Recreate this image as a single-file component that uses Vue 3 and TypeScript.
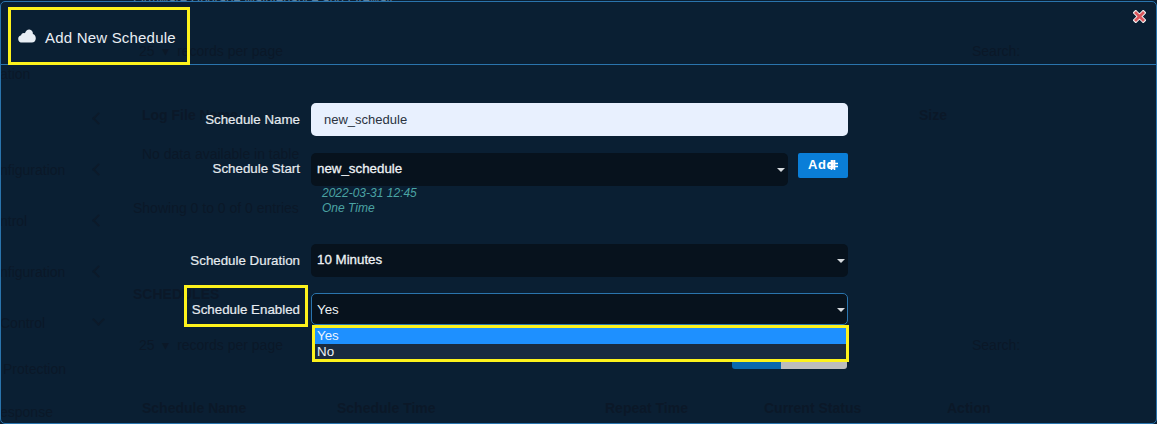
<template>
  <div class="screen">
    <!-- page dimmed behind the modal -->
    <div class="page" aria-hidden="true">
      <aside class="side">
        <div v-for="(item, i) in sideItems" :key="i" class="side-item">
          <span>{{ item.label }}</span>
          <i v-if="item.chevron" class="chev" :class="item.chevron"></i>
        </div>
      </aside>
      <main class="main">
        <div class="top-line">Firmware Upgrade Maintenance and Firewall</div>
        <div class="row row-a"><span class="ml8">25 &nbsp;▾&nbsp; records per page</span><span class="search">Search:</span></div>
        <div class="row row-b heavy"><span class="ml10">Log File Name</span><span class="size">Size</span></div>
        <div class="row row-c"><span class="ml10">No data available in table</span></div>
        <div class="row row-d"><span>Showing 0 to 0 of 0 entries</span></div>
        <div class="row row-e heavy"><span>SCHEDULES</span></div>
        <div class="row row-f"><span class="ml8">25 &nbsp;▾&nbsp; records per page</span><span class="search">Search:</span></div>
        <div class="row row-g heavy">
          <span class="col-a">Schedule Name</span>
          <span class="col-b">Schedule Time</span>
          <span class="col-c">Repeat Time</span>
          <span class="col-d">Current Status</span>
          <span class="col-e">Action</span>
        </div>
      </main>
    </div>

    <section class="modal">
      <header class="modal-head">
        <svg class="cloud" viewBox="0 0 18 14" width="18" height="14">
          <path d="M4.2 13.6C1.9 13.6.2 12 .2 9.9c0-1.8 1.2-3.200 2.900-3.600C3.400 4.900 4.500 4 5.800 4c.4 0 .8.100 1.100.2C7.700 1.900 9.500.4 11.400.6c2.300.200 3.700 2.100 3.500 4.500 1.700.500 2.900 2.200 2.900 4.100 0 2.500-1.700 4.400-3.900 4.400z" fill="#e8eef4" />
        </svg>
        <h2 class="title">Add New Schedule</h2>
        <svg class="close" viewBox="0 0 14 14" width="13" height="13">
          <path d="M3 3l8 8M11 3l-8 8" stroke="#f2f2f2" stroke-width="5" stroke-linecap="square" />
          <path d="M3.200 3.200l7.600 7.600M10.800 3.200l-7.600 7.600" stroke="#d9565c" stroke-width="3" stroke-linecap="square" />
        </svg>
      </header>

      <form class="form" @submit.prevent>
        <div class="field">
          <label class="label">Schedule Name</label>
          <input class="text-input" type="text" value="new_schedule" />
        </div>

        <div class="field field-start">
          <label class="label">Schedule Start</label>
          <div class="control">
            <div class="start-line">
              <div class="select select-start">new_schedule<i class="caret"></i></div>
              <button class="add-btn" type="button">Add<svg class="plus" viewBox="0 0 10 10" width="10" height="10"><path d="M0 3.500h10M0 6.500h10M3.500 0v10M6.500 0v10" stroke="#fff" stroke-width="1.600" /></svg></button>
            </div>
            <div class="hint">2022-03-31 12:45</div>
            <div class="hint">One Time</div>
          </div>
        </div>

        <div class="field field-duration">
          <label class="label">Schedule Duration</label>
          <div class="select">10 Minutes<i class="caret"></i></div>
        </div>

        <div class="field field-enabled">
          <label class="label">Schedule Enabled</label>
          <div class="control">
            <div class="select select-open">Yes<i class="caret"></i></div>
            <ul class="options">
              <li v-for="opt in enabledOptions" :key="opt" class="option" :class="{ active: opt === 'Yes' }">{{ opt }}</li>
            </ul>
          </div>
        </div>

        <div class="actions">
          <button class="btn-save" type="button"></button>
          <button class="btn-cancel" type="button"></button>
        </div>
      </form>
    </section>

    <!-- yellow annotation boxes drawn on top of the screenshot -->
    <div class="mark mark-title"></div>
    <div class="mark mark-label"></div>
    <div class="mark mark-options"></div>
  </div>
</template>

<script setup lang="ts">
interface SideItem {
  label: string
  chevron?: 'left' | 'down'
}

const sideItems: SideItem[] = [
  { label: 'ation' },
  { label: '', chevron: 'left' },
  { label: 'nfiguration', chevron: 'left' },
  { label: 'ntrol', chevron: 'left' },
  { label: 'nfiguration', chevron: 'left' },
  { label: 'Control', chevron: 'down' },
  { label: 'Protection' },
  { label: 'esponse' },
]

const enabledOptions: string[] = ['Yes', 'No']
</script>

<style>
html,
body {
  margin: 0;
  background: #0a1f33;
}
</style>

<style scoped>
.screen {
  position: relative;
  width: 1157px;
  height: 424px;
  overflow: hidden;
  background: #0a1f33;
  font-family: "Liberation Sans", Arial, sans-serif;
}

/* dimmed page */
.page {
  position: absolute;
  inset: 0;
  display: flex;
  color: #0b1828;
  font-size: 14px;
}

.side {
  width: 130px;
  flex-shrink: 0;
  padding-top: 64px;
  box-sizing: border-box;
}

.side-item {
  position: relative;
  height: 51px;
  line-height: 20px;
  white-space: nowrap;
}

.side-item:first-child {
  height: 45px;
}

.side-item:nth-child(6) {
  height: 46px;
}

.side-item:nth-child(7) {
  height: 43px;
  padding-left: 3px;
}

.chev {
  position: absolute;
  left: 94px;
  top: 2px;
  width: 7px;
  height: 7px;
  border-left: 2px solid #0c1a2a;
  border-bottom: 2px solid #0c1a2a;
}

.chev.left {
  transform: translateY(3px) rotate(45deg);
}

.chev.down {
  transform: translateY(0) rotate(-45deg);
}

.main {
  flex: 1;
  padding-left: 3px;
  position: relative;
}

.top-line {
  height: 1px;
  overflow: hidden;
  line-height: 0;
  font-size: 13px;
  color: #5a7f9f;
}

.row {
  display: flex;
  align-items: center;
  height: 20px;
  position: relative;
}

.row-a { margin-top: 40px; }
.row-b { margin-top: 44px; }
.row-c { margin-top: 19px; }
.row-d { margin-top: 34px; }
.row-e { margin-top: 66px; }
.row-f { margin-top: 31px; }
.row-g { margin-top: 43px; }

.heavy {
  font-weight: 700;
}

.ml8 { margin-left: 6px; }
.ml10 { margin-left: 9px; }

.search { position: absolute; left: 839px; }
.size { position: absolute; left: 786px; }
.col-a { position: absolute; left: 9px; }
.col-b { position: absolute; left: 204px; }
.col-c { position: absolute; left: 472px; }
.col-d { position: absolute; left: 631px; }
.col-e { position: absolute; left: 814px; }

/* modal */
.modal {
  position: absolute;
  inset: 1px 0 0 0;
  border: 1px solid #2a74ad;
  border-radius: 5px;
  box-sizing: border-box;
}

.modal-head {
  display: flex;
  align-items: center;
  height: 63px;
  padding: 8px 0 0 17px;
  border-bottom: 1px solid #2a74ad;
  box-sizing: border-box;
  position: relative;
}

.cloud {
  flex-shrink: 0;
  margin-top: -3px;
}

.title {
  margin: 0 0 0 9px;
  font-size: 15px;
  font-weight: 400;
  letter-spacing: 0.2px;
  color: #e9eef3;
}

.close {
  position: absolute;
  right: 10px;
  top: 8px;
}

.form {
  padding-top: 38px;
}

.field {
  display: flex;
  align-items: center;
  gap: 11px;
  width: 847px;
}

.field-start {
  align-items: flex-start;
  margin-top: 17px;
}

.field-start .label {
  line-height: 31px;
}

.field-duration {
  margin-top: 28px;
}

.field-enabled {
  align-items: flex-start;
  margin-top: 16px;
}

.field-enabled .label {
  line-height: 33px;
}

.label {
  width: 299px;
  flex-shrink: 0;
  text-align: right;
  font-size: 13.333px;
  color: #e6ebf0;
  -webkit-text-stroke: 0.2px #e6ebf0;
}

.control {
  flex: 1;
  min-width: 0;
  position: relative;
}

.text-input {
  flex: 1;
  min-width: 0;
  height: 33px;
  padding: 0 13px;
  box-sizing: border-box;
  border: 0;
  border-radius: 5px;
  outline: none;
  background: #e8f0fe;
  font: 13px "Liberation Sans", Arial, sans-serif;
  color: #2a3340;
}

.select {
  position: relative;
  flex: 1;
  min-width: 0;
  height: 33px;
  line-height: 32px;
  padding-left: 6px;
  box-sizing: border-box;
  border-radius: 5px;
  background: #07121d;
  font-size: 13.333px;
  color: #eef2f5;
  -webkit-text-stroke: 0.3px #eef2f5;
}

.select-open {
  height: 32px;
  line-height: 32px;
  padding-left: 5px;
  border: 1px solid #2a74ad;
  -webkit-text-stroke: 0;
}

.caret {
  position: absolute;
  right: 3px;
  top: 15px;
  width: 0;
  height: 0;
  border-left: 4px solid transparent;
  border-right: 4px solid transparent;
  border-top: 4px solid #d6dade;
}

.select-open .caret {
  right: 2px;
  top: 14px;
}

.start-line {
  display: flex;
  align-items: flex-start;
  gap: 10px;
}

.add-btn {
  display: flex;
  align-items: center;
  justify-content: center;
  width: 50px;
  height: 25px;
  padding: 0 0 2px;
  border: 0;
  border-radius: 2px;
  background: #0a7ed8;
  color: #fff;
  font: 700 13px "Liberation Sans", Arial, sans-serif;
  letter-spacing: 0.5px;
}

.plus {
  margin-left: -7px;
}

.hint {
  margin-left: 11px;
  font-size: 12px;
  font-style: italic;
  line-height: 15px;
  color: #4aa3a3;
}

.options {
  position: absolute;
  left: 3px;
  right: 0;
  top: 35px;
  margin: 0;
  padding: 0;
  list-style: none;
}

.option {
  height: 16px;
  line-height: 15px;
  padding-left: 3px;
  font-size: 13.333px;
  color: #eef2f5;
  background: #1a2b40;
}

.option.active {
  background: #1e90ff;
  color: #eaf4ff;
}

.actions {
  display: flex;
  justify-content: flex-end;
  width: 846px;
  margin-top: 13px;
}

.btn-save,
.btn-cancel {
  height: 30px;
  border: 0;
  padding: 0;
}

.btn-save {
  width: 49px;
  background: #0a68ad;
  border-radius: 3px 0 0 3px;
}

.btn-cancel {
  width: 66px;
  background: #bdbdbd;
  border-radius: 0 3px 3px 0;
}

.mark {
  position: absolute;
  border: 3px solid #fdf21c;
  box-sizing: border-box;
  pointer-events: none;
}

.mark-title {
  left: 8px;
  top: 7px;
  width: 182px;
  height: 58px;
}

.mark-label {
  left: 184px;
  top: 285px;
  width: 124px;
  height: 42px;
}

.mark-options {
  left: 312px;
  top: 325px;
  width: 537px;
  height: 37px;
}
</style>
